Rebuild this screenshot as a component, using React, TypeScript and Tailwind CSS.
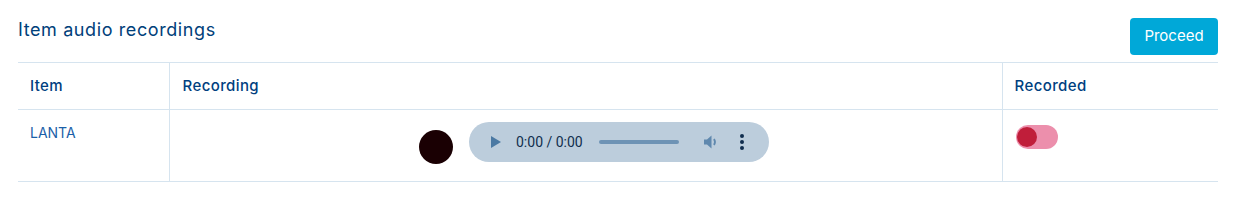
import React from 'react'

const font = { fontFamily: '"Inter", "Noto Sans", sans-serif' }

const AudioPlayer = () => (
  <div className="flex h-[40px] w-[300px] items-center rounded-full bg-[#bccddc] pl-[22px] pr-[24px]">
    <svg width="10" height="12" viewBox="0 0 10 12" className="shrink-0">
      <path d="M0 0 L10 6 L0 12 Z" fill="#4b79a3" />
    </svg>
    <span
      className="ml-[15px] text-[14px] text-[#102d4e]"
      style={{ fontFamily: '"Roboto", "Liberation Sans", sans-serif' }}
    >
      0:00 / 0:00
    </span>
    <div className="ml-[16px] h-[4px] w-[80px] rounded-full bg-[#6e93b5]" />
    <svg width="16" height="16" viewBox="0 0 16 16" className="ml-[24px] shrink-0">
      <path d="M1 5.5 H4 L8.5 1.5 V14.5 L4 10.5 H1 Z" fill="#5f88ae" />
      <path d="M11 5 Q13 8 11 11" stroke="#5f88ae" strokeWidth="1.8" fill="none" />
    </svg>
    <div className="ml-[21px] flex flex-col gap-[2px]">
      <span className="h-[4px] w-[4px] rounded-full bg-[#102d4e]" />
      <span className="h-[4px] w-[4px] rounded-full bg-[#102d4e]" />
      <span className="h-[4px] w-[4px] rounded-full bg-[#102d4e]" />
    </div>
  </div>
)

export default function App() {
  return (
    <div className="h-[206px] w-[1236px] bg-white px-[18px] pt-[18px]" style={font}>
      <div className="flex items-start justify-between">
        <h2 className="mt-[-2px] text-[18px] font-normal tracking-[0.6px] text-[#00407a]">
          Item audio recordings
        </h2>
        <button className="h-[37px] w-[88px] rounded-[4px] bg-[#00a8d8] text-[15px] text-white">
          Proceed
        </button>
      </div>
      <table className="mt-[7px] w-full border-collapse">
        <thead>
          <tr className="border-y border-[#d6e4ef]">
            <th className="h-[47px] w-[151px] border-r border-[#d6e4ef] pl-[12px] text-left text-[15px] font-medium tracking-[0.4px] text-[#003f7f]">
              Item
            </th>
            <th className="h-[47px] border-r border-[#d6e4ef] pl-[13px] text-left text-[15px] font-medium tracking-[0.4px] text-[#003f7f]">
              Recording
            </th>
            <th className="h-[47px] w-[216px] pl-[12px] text-left text-[15px] font-medium tracking-[0.4px] text-[#003f7f]">
              Recorded
            </th>
          </tr>
        </thead>
        <tbody>
          <tr className="border-b border-[#d6e4ef]">
            <td className="h-[72px] border-r border-[#d6e4ef] pl-[12px] pt-[12px] align-top text-[14px] text-[#1b5fa8]">
              LANTA
            </td>
            <td className="h-[72px] border-r border-[#d6e4ef] align-top">
              <div className="flex items-end justify-center pl-[17px] pt-[12px]">
                <div className="mb-[-2px] h-[34px] w-[34px] rounded-full bg-[#1a0003]" />
                <div className="ml-[16px]">
                  <AudioPlayer />
                </div>
              </div>
            </td>
            <td className="h-[72px] pl-[13px] pt-[15px] align-top">
              <div className="flex h-[24px] w-[42px] items-center rounded-full bg-[#ec8fac] pl-[1px]">
                <div className="h-[20px] w-[20px] rounded-full bg-[#c01e3a]" />
              </div>
            </td>
          </tr>
        </tbody>
      </table>
    </div>
  )
}
